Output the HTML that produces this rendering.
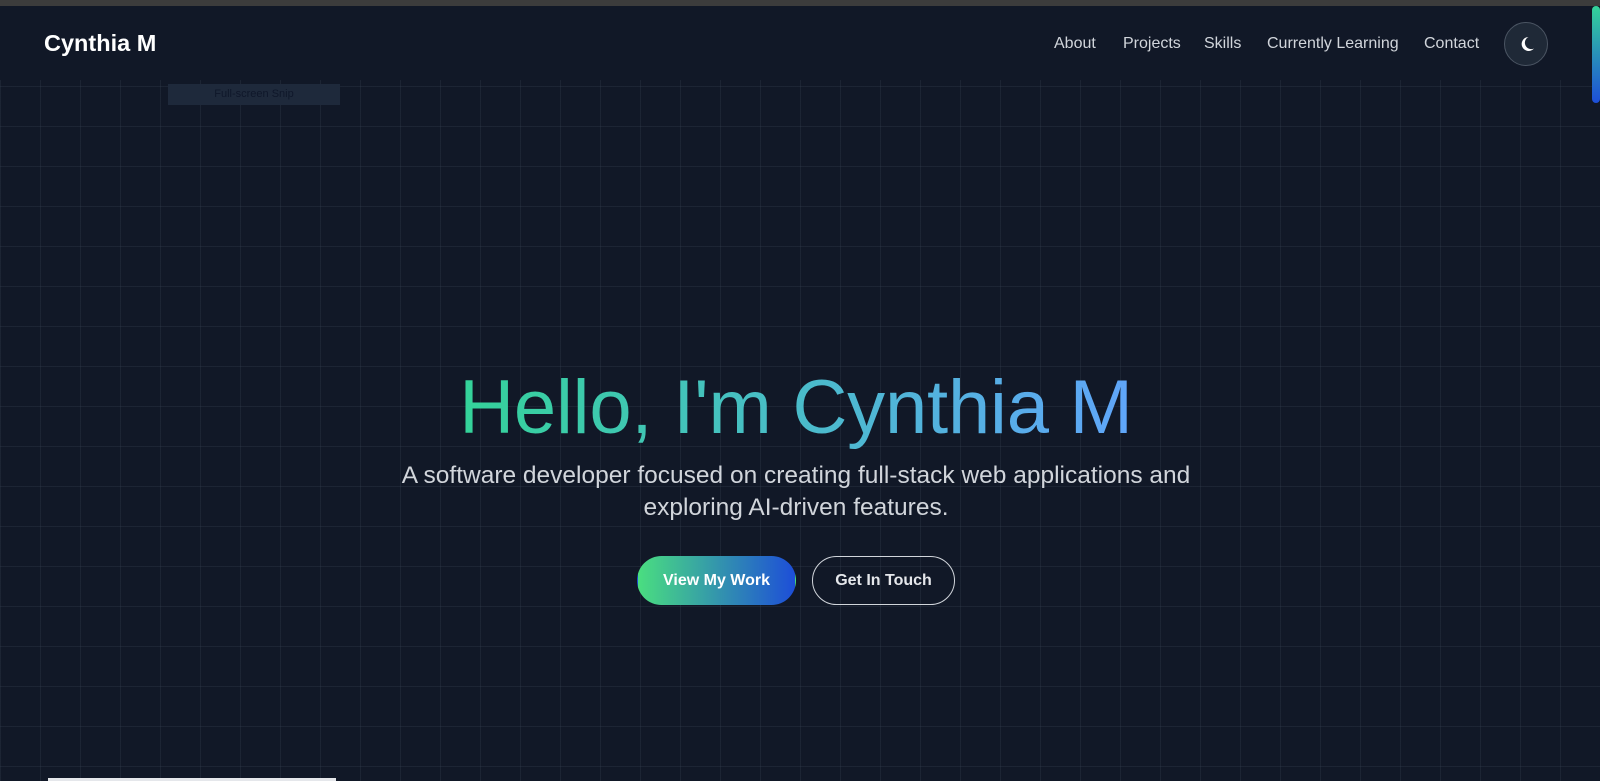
<!DOCTYPE html>
<html><head><meta charset="utf-8"><style>
*{margin:0;padding:0;box-sizing:border-box}
html,body{width:1600px;height:781px;overflow:hidden;background:#111827;font-family:"Liberation Sans",sans-serif}
.topbar{position:absolute;left:0;top:0;width:1600px;height:6px;background:#3c3c3c}
.grid{position:absolute;left:0;top:80px;width:1600px;height:701px;
background-image:linear-gradient(to right,rgba(55,65,81,.3) 1px,transparent 1px),linear-gradient(to bottom,rgba(55,65,81,.3) 1px,transparent 1px);
background-size:40px 40px;background-position:0 6px}
.logo{position:absolute;left:44px;top:30px;color:#fff;font-weight:bold;font-size:23.5px}
.nav{position:absolute;top:35px;font-size:16px;color:#d1d5db}
.moon{position:absolute;left:1504px;top:22px;width:44px;height:44px;border-radius:50%;border:1px solid #4b5563;background:#1f2937}
.scroll{position:absolute;left:1592px;top:6px;width:8px;height:97px;border-radius:4px;background:linear-gradient(#34d399,#1d4ed8)}
.snip{position:absolute;left:168px;top:84px;width:172px;height:21px;background:#1e293b;color:#0f172a;font-size:11px;text-align:center;line-height:21px}
h1{position:absolute;left:0;width:1592px;top:370px;text-align:center;font-size:76px;line-height:76px;font-weight:normal;letter-spacing:-0.2px}
h1 span{background:linear-gradient(90deg,#34d399,#60a5fa);-webkit-background-clip:text;background-clip:text;color:transparent}
.sub{position:absolute;left:0;width:1592px;top:460px;text-align:center;font-size:24.5px;line-height:32px;color:#d1d5db}
.btn{position:absolute;top:556px;height:49px;border-radius:25px;font-weight:bold;font-size:16px;line-height:47px;text-align:center}
.b1{left:637px;width:159px;background:linear-gradient(90deg,#4ade80,#1d4ed8);color:#fff;border:1px solid transparent}
.b2{left:812px;width:143px;border:1px solid #d1d5db;color:#e5e7eb}
.bot{position:absolute;left:48px;top:778px;width:288px;height:3px;background:#e5e7eb}
</style></head><body>
<div class="topbar"></div>
<div class="grid"></div>
<div class="snip">Full-screen Snip</div>
<div class="logo">Cynthia M</div>
<div class="nav" style="left:1054px">About</div>
<div class="nav" style="left:1123px">Projects</div>
<div class="nav" style="left:1204px">Skills</div>
<div class="nav" style="left:1267px">Currently Learning</div>
<div class="nav" style="left:1424px">Contact</div>
<div class="moon"><svg width="42" height="42" viewBox="0 0 42 42"><path d="M23.5 14a7 7 0 1 0 5.5 11.5a6 6 0 0 1-5.5-11.5z" fill="#fff"/></svg></div>
<div class="scroll"></div>
<h1><span>Hello, I'm Cynthia M</span></h1>
<div class="sub">A software developer focused on creating full-stack web applications and<br>exploring AI-driven features.</div>
<div class="btn b1">View My Work</div>
<div class="btn b2">Get In Touch</div>
<div class="bot"></div>
</body></html>
